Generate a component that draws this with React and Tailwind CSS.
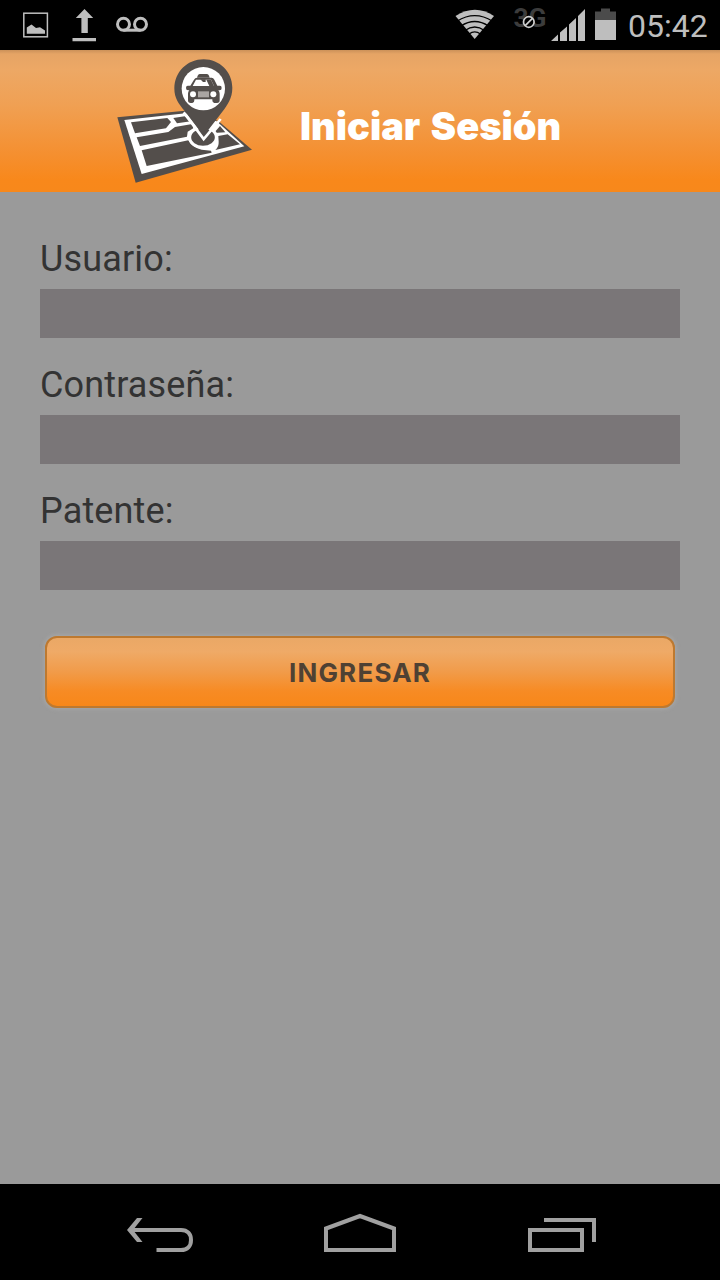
import React from "react";

function StatusBar() {
  return (
    <div className="flex h-[50px] shrink-0 items-center bg-black">
      <svg className="h-[50px] w-[180px]" viewBox="0 0 180 50" fill="#bebebe">
        <rect x="23.8" y="13.2" width="23.6" height="23.6" fill="none" stroke="#bebebe" strokeWidth="1.5" />
        <path d="M26.800 33.800V27.500l4.700-3 4.500 3.500 4-.8 5 3.200V33.800Z" />
        <path d="M84.500 9l8.700 9h-5.400v15h-6.400V18h-5.600ZM72.500 38h23.500v3.200H72.500Z" />
        <g fill="none" stroke="#bebebe" strokeWidth="3">
          <circle cx="123.500" cy="24.200" r="6" />
          <circle cx="140.500" cy="24.200" r="6" />
          <path d="M123.500 30.200h17" />
        </g>
      </svg>
      <svg className="ml-auto h-[50px] w-[188px]" viewBox="440 0 188 50" fill="#bebebe">
        <path d="M455.500 16Q475 3.500 494 16L474.700 39Z" />
        <g fill="none" stroke="#000" strokeWidth="1.300">
          <path d="M457 21.200Q474.700 10.200 492.500 21.200" />
          <path d="M461 26Q474.700 17 488.500 26" />
          <path d="M465 30.500Q474.700 23.500 484.500 30.500" />
          <path d="M469 34Q474.700 29.600 480.500 34" />
        </g>
        <text x="513.500" y="27" fill="#3c3c3c" fontFamily="Roboto, sans-serif" fontWeight="700" fontSize="25" textLength="33" lengthAdjust="spacingAndGlyphs">3G</text>
        <circle cx="528.800" cy="22" r="5.300" fill="#000" stroke="#d0d0d0" strokeWidth="1.700" />
        <path d="M525.200 25.600l7.200-7.200" stroke="#d0d0d0" strokeWidth="1.700" />
        <path d="M551 41l7-6.500V41ZM560 41v-8.500l7-6V41ZM569 41V24.500l7-6.500v23ZM578 41V16l7-7v32Z" />
        <path d="M595 20v-8.500h6V8.500h9v3h6V20Z" fill="#4b4b4b" />
        <path d="M595 20h21v20h-21Z" />
      </svg>
      <span className="w-[92px] shrink-0 whitespace-nowrap pt-px font-[Roboto,sans-serif] text-[32px] leading-[50px] text-[#bebebe]">05:42</span>
    </div>
  );
}

function MapLogo() {
  return (
    <svg className="ml-[105px] h-[142px] w-[160px] shrink-0" viewBox="0 0 480 426">
      <path d="M37 202L240 182L340 213L441 299L92 398Z" fill="#534e4b" />
      <path d="M58 210L242 190L335 214L418 289L110 372Z" fill="#fff" />
      <g fill="#534e4b">
        <path d="M78 217L187 204L198 216L183 235L90 250Z" />
        <path d="M205 204L239 199L258 214L216 220Z" />
        <path d="M95 262L190 246L210 231L262 222L265 235L248 245L246 260L105 288Z" />
        <path d="M110 301L250 271Q262 294 290 299L318 302L320 308L125 348Z" />
        <path d="M345 228L361 247L327 249Z" />
        <path d="M340 258L368 253L405 283L331 300Q342 290 341 275Z" />
      </g>
      <ellipse cx="294" cy="262" rx="40" ry="30" fill="#534e4b" stroke="#fff" strokeWidth="9" />
      <path d="M296 28C344 28 382 66 382 113C382 144 368 164 352 185L296 258L237 181C222 162 208 146 208 115C208 65 248 28 296 28Z" fill="#534e4b" />
      <path d="M236 187L296 267L347 207" fill="none" stroke="#fff" strokeWidth="8" />
      <circle cx="295" cy="116" r="65" fill="#fff" />
      <g fill="#534e4b">
        <path d="M284 72h22q4 0 6 5l2 6h-38l2-6q2-5 6-5Z" />
        <path d="M270 83h50q5 0 8 6l9 18h8q5 0 5 7t-6 7h-4q4 4 4 10v20q0 8-8 8h-8q-6 0-6-8v-3h-54v3q0 8-6 8h-5q-8 0-8-8v-20q0-6 4-10h-4q-6 0-6-7t5-7h8l11-18q3-6 9-6Z" />
      </g>
      <path d="M273 89h45l9 19h-64Z" fill="#fff" />
      <path d="M304 89h14l9 19h-14ZM286 88h16v8h-8Z" fill="#534e4b" />
      <circle cx="264" cy="133" r="9" fill="#fff" />
      <circle cx="325" cy="133" r="9" fill="#fff" />
      <path d="M279 124h33v18h-33Z" fill="#aaa5a2" />
    </svg>
  );
}

function Field({ label }) {
  return (
    <label className="block h-[126px]">
      <span className="block h-[49px] whitespace-nowrap text-[36px] leading-[38px] tracking-[0.15px]">{label}</span>
      <input className="block h-[49px] w-full bg-[#7a7678] px-3 outline-none" />
    </label>
  );
}

export default function App() {
  return (
    <div className="flex h-[1280px] w-[720px] flex-col overflow-hidden bg-[#9a9a9a] font-[Roboto,sans-serif] text-[#333]">
      <StatusBar />
      <header className="flex h-[142px] shrink-0 items-start bg-[linear-gradient(#cb9159_0px,#e5a465_4px,#eda865_20px,#f0a053_55px,#f58f2f_105px,#f8881b_130px,#f7881b_142px)]">
        <MapLogo />
        <h1 className="ml-[35px] mt-[52px] whitespace-nowrap font-[Inter,sans-serif] text-[38px] font-black leading-[48px] text-white [word-spacing:3px]">Iniciar Sesión</h1>
      </header>
      <main className="flex-1 px-10 pt-12">
        <Field label="Usuario:" />
        <Field label="Contraseña:" />
        <Field label="Patente:" />
        <button className="ml-[5px] mt-[18px] block h-[72px] w-[630px] rounded-[12px] border-2 border-[#bd7930] bg-[linear-gradient(#eaa866,#efaa67_20%,#f19b49_50%,#f78b24_78%,#f88719)] font-[Inter,sans-serif] text-[26px] font-bold tracking-[1.2px] text-[#4f4133] shadow-[0_0_4px_1px_#a9a9a9]">INGRESAR</button>
      </main>
      <nav className="h-24 shrink-0 bg-black">
        <svg className="h-24 w-[720px]" viewBox="0 1184 720 96" fill="none" stroke="#a0a0a0" strokeWidth="4">
          <path d="M156.500 1250H181C187.500 1250 191 1246 191 1240S187.500 1230 181 1230H131" />
          <path d="M137 1218h5.500L133 1230l9.500 12H137L127 1230Z" fill="#a0a0a0" stroke="none" />
          <path d="M326 1250V1228.500L360 1216L394 1228.500V1250Z" />
          <path d="M530 1230h52v20h-52ZM544 1220h50v22" />
        </svg>
      </nav>
    </div>
  );
}
